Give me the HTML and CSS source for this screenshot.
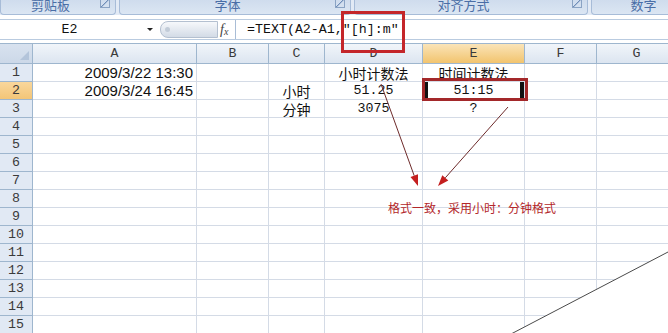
FILE: index.html
```html
<!DOCTYPE html>
<html lang="zh-CN">
<head>
    <meta charset="UTF-8">
    <meta name="viewport" content="width=device-width, initial-scale=1.0">
    <title>时间计数法 - TEXT 函数</title>
    <link rel="stylesheet" href="styles.css">
</head>
<body>

<!-- 功能区（只露出分组标题的下半部分） -->
<div class="ribbon">
    <div class="group g-clip"><span class="group-label">剪贴板</span><span class="launcher"></span></div>
    <div class="group g-font"><span class="group-label">字体</span><span class="launcher"></span></div>
    <div class="group g-align"><span class="group-label">对齐方式</span><span class="launcher"></span></div>
    <div class="group g-num"><span class="group-label">数字</span><span class="launcher"></span></div>
</div>

<!-- 编辑栏 -->
<div class="formula-bar">
    <div class="name-box">
        <span class="name">E2</span>
        <span class="dropdown"></span>
    </div>
    <div class="splitter">
        <span class="pill"><span class="knob"></span></span>
        <span class="fx">f<sub>x</sub></span>
    </div>
    <div class="formula">=TEXT(A2-A1,″[h]:m″</div>
</div>

<!-- 工作表 -->
<div class="sheet">
    <div class="row head">
        <div class="corner"><span class="corner-mark"></span></div>
        <div class="col-head">A</div>
        <div class="col-head">B</div>
        <div class="col-head">C</div>
        <div class="col-head">D</div>
        <div class="col-head active">E</div>
        <div class="col-head">F</div>
        <div class="col-head">G</div>
    </div>
    <div class="row">
        <div class="row-head">1</div>
        <div class="cell date">2009/3/22 13:30</div>
        <div class="cell"></div>
        <div class="cell"></div>
        <div class="cell cjk">小时计数法</div>
        <div class="cell cjk">时间计数法</div>
        <div class="cell"></div>
        <div class="cell"></div>
    </div>
    <div class="row">
        <div class="row-head active">2</div>
        <div class="cell date">2009/3/24 16:45</div>
        <div class="cell"></div>
        <div class="cell cjk">小时</div>
        <div class="cell num">51.25</div>
        <div class="cell num selected">51:15</div>
        <div class="cell"></div>
        <div class="cell"></div>
    </div>
    <div class="row">
        <div class="row-head">3</div>
        <div class="cell"></div>
        <div class="cell"></div>
        <div class="cell cjk">分钟</div>
        <div class="cell num">3075</div>
        <div class="cell num">?</div>
        <div class="cell"></div>
        <div class="cell"></div>
    </div>
    <div class="row"><div class="row-head">4</div><div class="cell"></div><div class="cell"></div><div class="cell"></div><div class="cell"></div><div class="cell"></div><div class="cell"></div><div class="cell"></div></div>
    <div class="row"><div class="row-head">5</div><div class="cell"></div><div class="cell"></div><div class="cell"></div><div class="cell"></div><div class="cell"></div><div class="cell"></div><div class="cell"></div></div>
    <div class="row"><div class="row-head">6</div><div class="cell"></div><div class="cell"></div><div class="cell"></div><div class="cell"></div><div class="cell"></div><div class="cell"></div><div class="cell"></div></div>
    <div class="row"><div class="row-head">7</div><div class="cell"></div><div class="cell"></div><div class="cell"></div><div class="cell"></div><div class="cell"></div><div class="cell"></div><div class="cell"></div></div>
    <div class="row"><div class="row-head">8</div><div class="cell"></div><div class="cell"></div><div class="cell"></div><div class="cell"></div><div class="cell"></div><div class="cell"></div><div class="cell"></div></div>
    <div class="row"><div class="row-head">9</div><div class="cell"></div><div class="cell"></div><div class="cell"></div><div class="cell"></div><div class="cell"></div><div class="cell"></div><div class="cell"></div></div>
    <div class="row"><div class="row-head">10</div><div class="cell"></div><div class="cell"></div><div class="cell"></div><div class="cell"></div><div class="cell"></div><div class="cell"></div><div class="cell"></div></div>
    <div class="row"><div class="row-head">11</div><div class="cell"></div><div class="cell"></div><div class="cell"></div><div class="cell"></div><div class="cell"></div><div class="cell"></div><div class="cell"></div></div>
    <div class="row"><div class="row-head">12</div><div class="cell"></div><div class="cell"></div><div class="cell"></div><div class="cell"></div><div class="cell"></div><div class="cell"></div><div class="cell"></div></div>
    <div class="row"><div class="row-head">13</div><div class="cell"></div><div class="cell"></div><div class="cell"></div><div class="cell"></div><div class="cell"></div><div class="cell"></div><div class="cell"></div></div>
    <div class="row"><div class="row-head">14</div><div class="cell"></div><div class="cell"></div><div class="cell"></div><div class="cell"></div><div class="cell"></div><div class="cell"></div><div class="cell"></div></div>
    <div class="row"><div class="row-head">15</div><div class="cell"></div><div class="cell"></div><div class="cell"></div><div class="cell"></div><div class="cell"></div><div class="cell"></div><div class="cell"></div></div>
</div>

<!-- 标注：红框、箭头、说明文字 -->
<svg class="marks" width="668" height="333" viewBox="0 0 668 333">
    <polygon points="668,252 511,334 668,334" fill="#fff"/>
    <line x1="668" y1="252" x2="511" y2="334" stroke="#4a4a4a" stroke-width="1"/>

    <rect x="342.5" y="12.5" width="61" height="39" fill="none" stroke="#c4262a" stroke-width="3"/>
    <rect x="423.5" y="79.5" width="103" height="20" fill="none" stroke="#a3282a" stroke-width="3"/>

    <line x1="381" y1="84" x2="414.2" y2="175.7" stroke="#6e2b2b" stroke-width="1"/>
    <polygon points="418,186 410.5,177.1 418,174.3" fill="#c41f1f"/>
    <line x1="508" y1="107" x2="445.3" y2="177.8" stroke="#6e2b2b" stroke-width="1"/>
    <polygon points="438,186 442.3,175.2 448.3,180.5" fill="#c41f1f"/>

    <text class="note" x="388" y="213">格式一致，采用小时：分钟格式</text>
</svg>

</body>
</html>
```

FILE: styles.css
```css
body {
    margin: 0;
    width: 668px;
    height: 333px;
    overflow: hidden;
    position: relative;
    background-color: #fff;
    font-family: "Liberation Sans", "Noto Sans CJK SC", sans-serif;
}

/* 功能区 */
.ribbon {
    display: flex;
    gap: 3px;
    height: 15px;
    background-color: #e2eaf5;
    overflow: hidden;
}

.group {
    display: flex;
    align-items: flex-end;
    height: 14px;
    border: 1px solid #a7bcd8;
    border-top: none;
    border-radius: 0 0 4px 4px;
    background: linear-gradient(#cfdced, #dbe6f3);
    flex-shrink: 0;
}

.g-clip { width: 114px; }
.g-font { width: 230px; }
.g-align { width: 232px; }
.g-num { width: 118px; }

.group-label {
    flex: 1;
    text-align: center;
    font-size: 13px;
    line-height: 14px;
    margin-bottom: 1px;
    color: #4a6ea6;
}

.launcher {
    width: 8px;
    height: 8px;
    margin: 0 5px 6px 0;
    border: 1px solid #8aa3c4;
    border-top: none;
    background: linear-gradient(135deg, transparent 45%, #6f8db8 50%, transparent 60%);
}

/* 编辑栏 */
.formula-bar {
    display: flex;
    box-sizing: border-box;
    height: 21px;
    margin-top: 4px;
    background-color: #fff;
    border-top: 1px solid #b9cbe0;
    border-bottom: 1px solid #b9cbe0;
}

.name-box {
    display: flex;
    align-items: center;
    width: 158px;
}

.name {
    flex: 1;
    text-align: center;
    padding-right: 8px;
    font-family: "Liberation Mono", monospace;
    font-size: 13.3px;
    color: #111;
}

.dropdown {
    width: 0;
    height: 0;
    margin-right: 5px;
    border-left: 3px solid transparent;
    border-right: 3px solid transparent;
    border-top: 3px solid #222;
}

.splitter {
    display: flex;
    align-items: center;
    width: 77px;
    border-right: 1px solid #a9bdd6;
}

.pill {
    display: flex;
    align-items: center;
    width: 56px;
    height: 15px;
    margin-left: 2px;
    border: 1px solid #b4c0d0;
    border-radius: 8px 0 0 8px;
    background: linear-gradient(#f6f8fb, #d3dbe6);
}

.knob {
    width: 5px;
    height: 5px;
    margin-left: 4px;
    border-radius: 50%;
    background-color: #c2ccd8;
}

.fx {
    margin-left: 2px;
    font-family: "Liberation Serif", serif;
    font-style: italic;
    font-size: 14px;
    color: #444;
}

.fx sub {
    font-size: 10px;
    vertical-align: -1px;
}

.formula {
    padding-left: 11px;
    font-family: "Liberation Mono", monospace;
    font-size: 13.3px;
    line-height: 19px;
    color: #111;
    white-space: nowrap;
}

/* 工作表 */
.sheet {
    margin-top: 3px;
    border-top: 1px solid #9eb6ce;
    background-color: #fff;
}

.row {
    display: grid;
    grid-template-columns: 33px 164px 72px 56px 98px 102px 72px 80px;
    height: 18px;
}

.row.head {
    height: 20px;
}

.row > div {
    box-sizing: border-box;
    border-right: 1px solid #d4dbe6;
    border-bottom: 1px solid #d4dbe6;
    line-height: 17px;
    white-space: nowrap;
}

.corner {
    position: relative;
    background: linear-gradient(#d8e2ef, #ccd8e8);
}

.row .corner,
.row .col-head,
.row .row-head {
    border-color: #9eb6ce;
}

.corner-mark {
    position: absolute;
    right: 3px;
    bottom: 3px;
    width: 0;
    height: 0;
    border-left: 9px solid transparent;
    border-bottom: 9px solid #b3c4da;
}

.row .col-head {
    text-align: center;
    font-family: "Liberation Mono", monospace;
    font-size: 13.3px;
    line-height: 19px;
    color: #3a3a3a;
    background: linear-gradient(#f1f5fa, #dce5f0);
}

.row .col-head.active {
    background: linear-gradient(#fae4b8, #f2c46e);
}

.row-head {
    text-align: center;
    font-family: "Liberation Mono", monospace;
    font-size: 13.3px;
    color: #3a3a3a;
    background-color: #e1e9f4;
}

.row-head.active {
    background: linear-gradient(#f9d79c, #f3c577);
}

.cell {
    text-align: center;
    color: #111;
}

.cell.date {
    text-align: right;
    padding-right: 3px;
    font-size: 15px;
}

.row .cell.cjk {
    font-family: "Noto Sans CJK SC", sans-serif;
    font-size: 14px;
    line-height: 16px;
    padding-top: 1px;
}

.cell.num {
    font-family: "Liberation Mono", monospace;
    font-size: 13.3px;
}

.cell.selected {
    box-shadow: inset 5px 0 0 #111, inset -4px 0 0 #111;
}

/* 标注 */
.marks {
    position: absolute;
    top: 0;
    left: 0;
    pointer-events: none;
}

.note {
    font-family: "Noto Sans CJK SC", sans-serif;
    font-size: 12px;
    fill: #b3272a;
}
```
